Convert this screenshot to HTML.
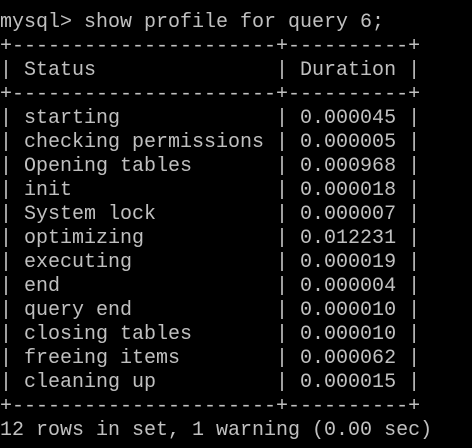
<!DOCTYPE html>
<html><head><style>
html,body{margin:0;background:#000;width:472px;height:448px;overflow:hidden}
pre{margin:0;padding:11px 0 0 0;font-family:"Liberation Mono",monospace;font-size:20px;line-height:24px;color:#c0c0c0;letter-spacing:0}
</style></head><body><pre>mysql&gt; show profile for query 6;
+----------------------+----------+
| Status               | Duration |
+----------------------+----------+
| starting             | 0.000045 |
| checking permissions | 0.000005 |
| Opening tables       | 0.000968 |
| init                 | 0.000018 |
| System lock          | 0.000007 |
| optimizing           | 0.012231 |
| executing            | 0.000019 |
| end                  | 0.000004 |
| query end            | 0.000010 |
| closing tables       | 0.000010 |
| freeing items        | 0.000062 |
| cleaning up          | 0.000015 |
+----------------------+----------+
12 rows in set, 1 warning (0.00 sec)</pre></body></html>
